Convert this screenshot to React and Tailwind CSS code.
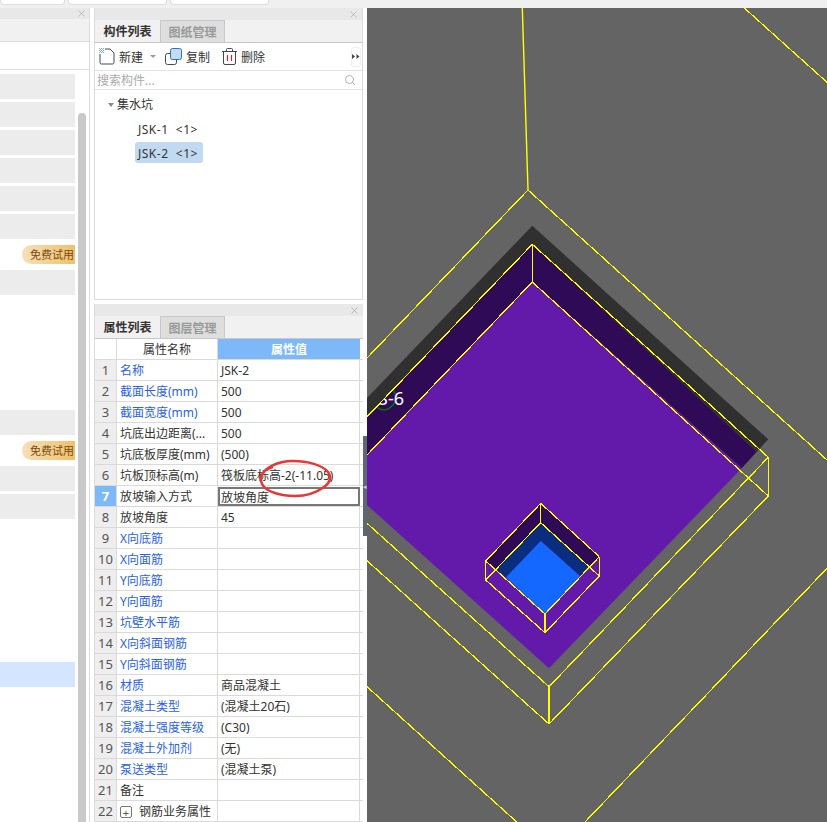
import React from "react";
import { X, Search } from "lucide-react";

const leftRows = [
  "gray", "gray", "gray", "gray", "gray", "gray", "badge", "gray", "", "", "", "",
  "gray", "badge", "gray", "gray", "", "", "", "", "", "blue",
];

const props = [
  { name: "名称", value: "JSK-2", blue: true },
  { name: "截面长度(mm)", value: "500", blue: true },
  { name: "截面宽度(mm)", value: "500", blue: true },
  { name: "坑底出边距离(...", value: "500" },
  { name: "坑底板厚度(mm)", value: "(500)" },
  { name: "坑板顶标高(m)", value: "筏板底标高-2(-11.05)" },
  { name: "放坡输入方式", value: "放坡角度", active: true },
  { name: "放坡角度", value: "45" },
  { name: "X向底筋", value: "", blue: true },
  { name: "X向面筋", value: "", blue: true },
  { name: "Y向底筋", value: "", blue: true },
  { name: "Y向面筋", value: "", blue: true },
  { name: "坑壁水平筋", value: "", blue: true },
  { name: "X向斜面钢筋", value: "", blue: true },
  { name: "Y向斜面钢筋", value: "", blue: true },
  { name: "材质", value: "商品混凝土", blue: true },
  { name: "混凝土类型", value: "(混凝土20石)", blue: true },
  { name: "混凝土强度等级", value: "(C30)", blue: true },
  { name: "混凝土外加剂", value: "(无)", blue: true },
  { name: "泵送类型", value: "(混凝土泵)", blue: true },
  { name: "备注", value: "" },
  { name: "钢筋业务属性", value: "", expand: true },
];

const PanelHeader = () => (
  <div className="h-[12px] bg-[#e8e8e8] flex items-center justify-end pr-[3px] shrink-0">
    <X size={11} strokeWidth={1.5} className="text-[#a8a8a8]" />
  </div>
);

const PanelTabs = ({ active, other }) => (
  <div className="h-[23px] bg-[#f1f1f1] border-b border-[#c8c8c8] flex shrink-0">
    <div className="w-[65px] pt-[2px] flex items-center justify-center font-bold text-[#333]">{active}</div>
    <div className="w-[65px] pt-[2px] flex items-center justify-center font-bold text-[#999] bg-[#dedede] border-x border-t border-[#c8c8c8]">{other}</div>
  </div>
);

const LeftPanel = () => (
  <div className="w-[90px] border-r border-[#dcdcdc] flex flex-col shrink-0">
    <div className="h-[11px] bg-[#e8e8e8] flex items-center justify-end pr-[2px] shrink-0">
      <X size={11} strokeWidth={1.5} className="text-[#a8a8a8]" />
    </div>
    <div className="h-[23px] bg-[#f1f1f1] border-b border-[#dcdcdc] shrink-0" />
    <div className="h-[28px] border-b border-[#dcdcdc] shrink-0" />
    <div className="flex flex-1 min-h-0 gap-[3px]">
      <div className="w-[75px] pt-[4px] flex flex-col gap-[3px]">
        {leftRows.map((kind, i) => (
          <div
            key={i}
            className={`h-[25px] shrink-0 flex items-center justify-end ${
              kind === "gray" ? "bg-[#ececec]" : kind === "blue" ? "bg-[#d3e5ff]" : ""
            }`}
          >
            {kind === "badge" && (
              <span className="h-[19px] w-[53px] pl-[8px] pt-[2px] flex items-center rounded-l-full bg-gradient-to-r from-[#f6dfb8] to-[#f0c069] text-[11px] text-[#7a4a10] whitespace-nowrap">
                免费试用
              </span>
            )}
          </div>
        ))}
      </div>
      <div className="w-[8px] mt-[43px] bg-[#c9c9c9] rounded-t-[4px]" />
    </div>
  </div>
);

const NewIcon = () => (
  <svg width="16" height="17" viewBox="0 0 16 17" fill="none">
    <path d="M1 6v8.5a1.5 1.5 0 0 0 1.5 1.5h11a1.5 1.5 0 0 0 1.5-1.5V5l-4-4H6" stroke="#3c4a5c" strokeWidth="1" />
    <rect x="0" y="0" width="5" height="5" fill="#7fa8ee" />
    <path d="M1 0h1v1H1zM3 0h1v1H3zM0 1h1v1H0zM2 1h1v1H2zM4 1h1v1H4zM1 2h1v1H1zM3 2h1v1H3zM0 3h1v1H0zM2 3h1v1H2zM4 3h1v1H4zM1 4h1v1H1zM3 4h1v1H3z" fill="#fff" />
  </svg>
);

const CopyIcon = () => (
  <svg width="17" height="17" viewBox="0 0 17 17" fill="none">
    <rect x="0.5" y="5.5" width="11" height="11" rx="2" fill="#fff" stroke="#3c4a5c" />
    <rect x="5.5" y="0.5" width="11" height="11" rx="2" fill="#c4dcfa" stroke="#2f6fd0" />
  </svg>
);

const TrashIcon = () => (
  <svg width="15" height="17" viewBox="0 0 15 17" fill="none">
    <path d="M4.5 3V1.5a1 1 0 0 1 1-1h4a1 1 0 0 1 1 1V3" stroke="#3c4a5c" />
    <path d="M0 3.5h15" stroke="#3c4a5c" />
    <path d="M1.5 3.5v11.5a1.5 1.5 0 0 0 1.5 1.5h9a1.5 1.5 0 0 0 1.5-1.5V3.5" stroke="#3c4a5c" />
    <path d="M5.5 7v6M9.5 7v6" stroke="#d8232a" strokeWidth="1.2" />
  </svg>
);

const ListPanel = () => (
  <div className="h-[292px] border-x border-b border-[#dcdcdc] flex flex-col shrink-0">
    <PanelHeader />
    <PanelTabs active="构件列表" other="图纸管理" />
    <div className="h-[28px] border-b border-[#e2e2e2] flex items-center pl-[4px] pr-[1px] text-[#333] shrink-0">
      <NewIcon />
      <span className="ml-[4px] mt-[2px]">新建</span>
      <span className="ml-[7px] w-0 h-0 border-x-[3px] border-x-transparent border-t-[3px] border-t-[#999]" />
      <span className="ml-[9px]"><CopyIcon /></span>
      <span className="ml-[4px] mt-[2px]">复制</span>
      <span className="ml-[12px]"><TrashIcon /></span>
      <span className="ml-[4px] mt-[2px]">删除</span>
      <div className="ml-auto w-[10px] h-[20px] border border-[#eeeeee] rounded-[3px] flex items-center justify-center">
        <svg width="8" height="5" viewBox="0 0 8 5" fill="#444">
          <path d="M0 0l3 2.5L0 5zM4.5 0l3 2.5L4.5 5z" />
        </svg>
      </div>
    </div>
    <div className="h-[19px] border-b border-[#e2e2e2] flex items-center justify-between pl-[2px] pr-[6px] text-[#aaa] shrink-0">
      <span className="mt-[2px]">搜索构件...</span>
      <Search size={12} className="text-[#b0b0b0]" />
    </div>
    <div className="flex flex-col text-[#333]">
      <div className="h-[21px] mt-[3px] pt-[2px] flex items-center pl-[13px]">
        <span className="w-0 h-0 border-x-[3.5px] border-x-transparent border-t-[4px] border-t-[#888]" />
        <span className="ml-[3px]">集水坑</span>
      </div>
      <div className="h-[21px] mt-[4px] pt-[2px] flex items-center pl-[43px] whitespace-pre tracking-[0.5px]">JSK-1  {"<1>"}</div>
      <div className="h-[21px] mt-[3px] pt-[2px] ml-[40px] w-[68px] pl-[3px] flex items-center bg-[#c2d9f2] rounded-[3px] whitespace-pre tracking-[0.5px]">JSK-2  {"<1>"}</div>
    </div>
  </div>
);

const PropRow = ({ row, index }) => (
  <div className="h-[21px] flex border-b border-[#dadada] shrink-0">
    <div className={`w-[22px] pt-[2px] border-r border-[#dadada] flex items-center justify-center text-[13px] ${row.active ? "bg-[#7db8f8] text-white font-bold" : "bg-[#eeeeee] text-[#555]"}`}>
      {index + 1}
    </div>
    <div className={`w-[101px] pt-[2px] border-r border-[#dadada] pl-[3px] flex items-center whitespace-nowrap overflow-hidden ${row.blue ? "text-[#2a62e0]" : "text-[#333]"}`}>
      {row.expand && (
        <span className="mr-[7px] w-[12px] h-[12px] border border-[#777] rounded-[2px] flex items-center justify-center text-[11px] leading-none text-[#555]">+</span>
      )}
      {row.name}
    </div>
    <div className={`w-[142px] pt-[2px] flex items-center whitespace-nowrap text-[#333] ${row.active ? "border-2 border-[#777] pl-[1px] mt-px" : "pl-[3px] border-r border-[#dadada]"}`}>
      {row.value}
    </div>
  </div>
);

const PropPanel = () => (
  <div className="relative flex-1 min-h-0 border-l border-[#dcdcdc] flex flex-col overflow-hidden">
    <PanelHeader />
    <PanelTabs active="属性列表" other="图层管理" />
    <div className="h-[21px] flex border-b border-[#dadada] shrink-0">
      <div className="w-[22px] border-r border-[#dadada]" />
      <div className="w-[101px] pt-[2px] border-r border-[#dadada] flex items-center justify-center text-[#333]">属性名称</div>
      <div className="w-[142px] pt-[2px] bg-[#7db8f8] flex items-center justify-center text-white font-bold">属性值</div>
    </div>
    {props.map((row, i) => (
      <PropRow key={i} row={row} index={i} />
    ))}
    {/* red hand drawn note over the table */}
    <svg className="absolute left-[162px] top-[154px]" width="76" height="42" viewBox="0 0 76 42" fill="none">
      <path
        d="M3 21C6 10 20 3 36 3c15 0 29 4 35 11 4 5 2 11-4 15-8 6-18 9-29 9-14 0-29-4-33-12-2-4-1-8 1-11 2-3 6-5 10-6"
        stroke="#e23a36"
        strokeWidth="2.6"
      />
    </svg>
  </div>
);

const Line = ({ d, w = 1.2 }) => <path d={d} stroke="#ffff00" strokeWidth={w} fill="none" shapeRendering="crispEdges" />;

// viewBox is the screenshot's own pixels, canvas begins at x=367 y=8
const Canvas = () => (
  <div className="flex-1 bg-[#646464] min-w-0">
    <svg width="460" height="814" viewBox="367 8 460 814" className="block">
      <defs>
        <clipPath id="band">
          <polygon points="532.3,244.3 756.7,451.7 741.7,468.3 532.3,282 367,455 367,416.7" />
        </clipPath>
      </defs>
      <polygon points="532.3,225.7 768.3,439.3 756.7,451.7 532.3,244.3 367,416.7 367,398" fill="#303030" />
      <polygon points="532.3,244.3 756.7,451.7 741.7,468.3 532.3,282 367,455 367,416.7" fill="#2f0b57" />
      <polygon points="532.3,282 741.7,468.3 549,668.3 367,505 367,455" fill="#631aab" />

      <g clipPath="url(#band)">
        <path d="M393 389c4 7 3 13-1 17-4 4-9 5-14 2l-5-2" stroke="#008000" strokeWidth="1.2" fill="none" />
        <text x="404" y="405" textAnchor="end" fill="#ffffff" fontSize="18" fontFamily="Noto Sans">8-6</text>
      </g>

      <path d="M522.3 8L528 190" stroke="#ffff00" strokeWidth="1.4" fill="none" />
      <Line d="M528 190L367 358M528 190L827 460M744.3 8L827 82.3" />
      <Line d="M532.3 244.3V282M532.3 244.3L367 416.7M532.3 282L367 455M532.3 244.3L768.3 457.3M532.3 282L768.3 496M768.3 457.3V496" />
      <Line d="M768.3 457.3L549 686.7M768.3 496L549 724M549 686.7L367 523.3M549 724L367 560.7" />
      <Line d="M549 686.7V724" w={2} />
      <Line d="M367 686.7L516.7 822M827 568.3L585 822" />

      <polygon points="540.7,503.3 599.3,556.7 589.3,567.3 540.7,522.7 496,569.3 485.7,561" fill="#2f0b57" />
      <polygon points="540.7,522.7 589.3,567.3 580,576 540.7,541 506,577.3 496,569.3" fill="#0a2d80" />
      <polygon points="540.7,541 580,576 545,614 506,577.3" fill="#1467ff" />
      <Line d="M540.7 503.3L485.7 561M540.7 503.3L599.3 556.7M540.7 503.3V522.7M540.7 522.7L485.7 580M540.7 522.7L599.3 576" />
      <Line d="M485.7 561V580M599.3 556.7V576M545 614V632.7M485.7 561L545 614M599.3 556.7L545 614M485.7 580L545 632.7M599.3 576L545 632.7" />
    </svg>
  </div>
);

export default function App() {
  return (
    <div className="w-[827px] h-[822px] overflow-hidden bg-white flex flex-col text-[12px] font-['Noto_Sans','Noto_Sans_CJK_SC',sans-serif]">
      <div className="h-[8px] bg-[#f0f0f0] flex gap-[3px] shrink-0">
        <div className="w-[65px] h-[5px] bg-white border border-t-0 border-[#dcdcdc] rounded-b-[4px]" />
        <div className="w-[99px] h-[5px] bg-white border border-t-0 border-[#dcdcdc] rounded-b-[4px]" />
        <div className="w-[99px] h-[5px] bg-white border border-t-0 border-[#dcdcdc] rounded-b-[4px]" />
      </div>
      <div className="flex flex-1 min-h-0">
        <LeftPanel />
        <div className="w-[269px] ml-[4px] flex flex-col gap-[4px] shrink-0">
          <ListPanel />
          <PropPanel />
        </div>
        <div className="w-[4px] shrink-0 pt-[428px]">
          <div className="h-[100px] bg-[#5d6873] flex items-center justify-end text-[7px] leading-none text-[#cfcfcf]">◂</div>
        </div>
        <Canvas />
      </div>
    </div>
  );
}
